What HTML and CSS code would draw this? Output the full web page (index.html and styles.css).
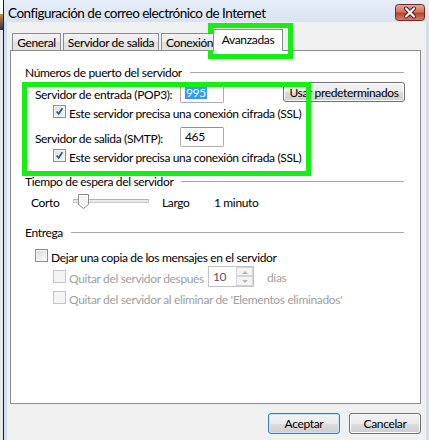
FILE: index.html
```html
<!DOCTYPE html>
<html lang="es">
<head>
  <meta charset="UTF-8" />
  <meta name="viewport" content="width=device-width, initial-scale=1.0"/>
  <title>Configuración de correo electrónico de Internet</title>
  <link rel="stylesheet" href="styles.css">
</head>
<body>

  <div class="screen">
    <div class="desk"></div>

    <div class="window">
      <div class="titlebar">
        <span class="title">Configuración de correo electrónico de Internet</span>
        <div class="close">
          <svg viewBox="0 0 30 17" width="30" height="17">
            <defs>
              <linearGradient id="red" x1="0" y1="0" x2="0" y2="1">
                <stop offset="0" stop-color="#e9a99b"/>
                <stop offset="0.45" stop-color="#d47461"/>
                <stop offset="0.55" stop-color="#c2432e"/>
                <stop offset="1" stop-color="#d8806a"/>
              </linearGradient>
            </defs>
            <rect x="0.5" y="0.5" width="29" height="16" rx="3" fill="url(#red)" stroke="#6b2b24"/>
            <path d="M11 4.5 L19 12.5 M19 4.5 L11 12.5" stroke="#4a1d18" stroke-width="4" stroke-linecap="round"/>
            <path d="M11 4.5 L19 12.5 M19 4.5 L11 12.5" stroke="#fff" stroke-width="2.2" stroke-linecap="round"/>
          </svg>
        </div>
      </div>

      <div class="client">
        <div class="tabs">
          <div class="tab tab-general">General</div>
          <div class="tab tab-salida">Servidor de salida</div>
          <div class="tab tab-conexion">Conexión</div>
          <div class="tab tab-avanzadas active">Avanzadas</div>
        </div>

        <div class="panel">
          <div class="group-head head-puertos">
            <span>Números de puerto del servidor</span>
            <div class="rule"></div>
          </div>

          <div class="row row-field row-pop">
            <span class="field-label">Servidor de entrada (POP3):</span>
            <div class="textbox"><span class="sel">995</span></div>
            <button class="btn btn-defaults">Usar predeterminados</button>
          </div>

          <div class="row row-check indent-2">
            <span class="check checked"></span>
            <span>Este servidor precisa una conexión cifrada (SSL)</span>
          </div>

          <div class="row row-field row-smtp">
            <span class="field-label">Servidor de salida (SMTP):</span>
            <div class="textbox">465</div>
          </div>

          <div class="row row-check indent-2">
            <span class="check checked"></span>
            <span>Este servidor precisa una conexión cifrada (SSL)</span>
          </div>

          <div class="group-head head-tiempo">
            <span>Tiempo de espera del servidor</span>
            <div class="rule"></div>
          </div>

          <div class="row row-slider">
            <span class="slider-min">Corto</span>
            <div class="slider">
              <div class="track"></div>
              <svg class="thumb" viewBox="0 0 11 15" width="11" height="15">
                <path d="M0.5 0.5 H10.5 V10.5 L5.5 14.5 L0.5 10.5 Z" fill="#f4f4f4" stroke="#8a8a8a"/>
                <path d="M1.5 1.5 H9.5 V10 L5.5 13.2 L1.5 10 Z" fill="none" stroke="#fff"/>
              </svg>
            </div>
            <span class="slider-max">Largo</span>
            <span>1 minuto</span>
          </div>

          <div class="group-head head-entrega">
            <span>Entrega</span>
            <div class="rule"></div>
          </div>

          <div class="row row-check indent-1 row-dejar">
            <span class="check"></span>
            <span>Dejar una copia de los mensajes en el servidor</span>
          </div>

          <div class="row row-check indent-2 disabled row-despues">
            <span class="check"></span>
            <span class="despues-label">Quitar del servidor después</span>
            <div class="spinner">
              <span class="spin-value">10</span>
              <div class="spin-buttons">
                <span class="spin-up"></span>
                <span class="spin-down"></span>
              </div>
            </div>
            <span class="dias">días</span>
          </div>

          <div class="row row-check indent-2 disabled">
            <span class="check"></span>
            <span>Quitar del servidor al eliminar de 'Elementos eliminados'</span>
          </div>
        </div>

        <div class="actions">
          <button class="btn btn-default">Aceptar</button>
          <button class="btn">Cancelar</button>
        </div>
      </div>
    </div>

    <!-- green highlight boxes drawn over the dialog -->
    <div class="mark mark-tab"></div>
    <div class="mark mark-ports"></div>
  </div>

</body>
</html>
```

FILE: styles.css
```css
body {
  margin: 0;
  padding: 0;
  font-family: Lato, 'Noto Sans', sans-serif;
  font-size: 12px;
  letter-spacing: -0.35px;
  color: #000;
  background: #fff;
  overflow: hidden;
}

.screen {
  position: relative;
  width: 429px;
  height: 440px;
  display: flex;
  overflow: hidden;
}

.desk {
  width: 3px;
  background: linear-gradient(#ffffff 0, #ffffff 14px, #c98a3a 14px, #2a2f55 30px, #e7e7e7 30px);
}

.window {
  flex: 1;
  display: flex;
  flex-direction: column;
  border-left: 1px solid #1b1b1b;
  background: linear-gradient(#e6eef8, #d8e4f2 22px, #cfdff1 22px);
}

.titlebar {
  height: 22px;
  display: flex;
  align-items: center;
  padding-left: 4px;
}

.title {
  font-size: 13.5px;
  letter-spacing: -0.5px;
  margin-top: 3px;
}

.close {
  margin-left: auto;
  margin-right: 4px;
  margin-top: 3px;
  height: 17px;
}

.close svg {
  display: block;
}

.client {
  flex: 1;
  background: #f0f0f0;
  margin: 0 3px 0 3px;
  padding-left: 3px;
  padding-right: 5px;
}

/* tabs */
.tabs {
  display: flex;
  align-items: flex-end;
  height: 21px;
  margin-top: 7px;
  padding-left: 2px;
  position: relative;
  z-index: 1;
}

.tab {
  box-sizing: border-box;
  height: 17px;
  border: 1px solid #898c95;
  border-bottom: none;
  background: linear-gradient(#f3f3f3, #ebebeb 50%, #dedede 50%, #e5e5e5);
  display: flex;
  align-items: center;
  justify-content: center;
  margin-right: 2px;
  white-space: nowrap;
}

.tab-general { width: 49px; }
.tab-salida { width: 96px; }
.tab-conexion { width: 54px; margin-right: -2px; justify-content: flex-start; padding-left: 4px; }
.tab-avanzadas { width: 70px; }

.tab.active {
  height: 22px;
  margin-bottom: -1px;
  background: #fff;
  padding-bottom: 2px;
}

/* main panel */
.panel {
  box-sizing: border-box;
  height: 354px;
  background: #fff;
  border: 1px solid #898c95;
  padding: 0 16px 0 14px;
  display: flex;
  flex-direction: column;
}

.group-head {
  height: 16px;
  display: flex;
  align-items: center;
  white-space: nowrap;
}

.group-head .rule {
  flex: 1;
  border-top: 1px solid #a6a6a6;
  margin-left: 8px;
}

.head-puertos { margin-top: 13px; }
.head-tiempo { margin-top: 8px; }
.head-entrega { margin-top: 13px; }

.row {
  display: flex;
  align-items: center;
  white-space: nowrap;
}

.row-field {
  height: 23px;
  padding-left: 10px;
}

.row-pop { margin-top: 1px; }
.row-smtp { margin-top: 4px; }

.field-label {
  width: 145px;
  padding-top: 3px;
}

.textbox {
  box-sizing: border-box;
  width: 44px;
  height: 20px;
  border: 1px solid #abadb3;
  border-top-color: #8e9399;
  border-radius: 2px;
  padding-left: 4px;
  display: flex;
  align-items: center;
}

.sel {
  background: #3399ff;
  color: #fff;
  padding: 0 1px;
  line-height: 13px;
}

.row-check {
  height: 17px;
}

.indent-1 { padding-left: 10px; }
.indent-2 { padding-left: 28px; }

.check {
  box-sizing: border-box;
  width: 13px;
  height: 13px;
  border: 1px solid #8f8f8f;
  background: linear-gradient(135deg, #dcdcdc, #fbfbfb);
  box-shadow: inset 0 0 0 1px #f4f4f4;
  margin-right: 3px;
  flex-shrink: 0;
  margin-top: -3px;
}

.check.checked {
  background:
    url("data:image/svg+xml;utf8,<svg xmlns='http://www.w3.org/2000/svg' viewBox='0 0 11 11'><path d='M2 5.5 L4.5 8.5 L9 1.5' fill='none' stroke='%232d4a98' stroke-width='2'/></svg>") center / 9px 9px no-repeat,
    linear-gradient(135deg, #dcdcdc, #fbfbfb);
}

.row-dejar { margin-top: 8px; }
.row-despues { height: 21px; margin-top: 2px; }
.row-despues + .row-check { margin-top: 2px; }

.disabled {
  color: #a0a0a0;
}

.disabled .check {
  border-color: #c5c5c5;
  background: #f4f4f4;
  box-shadow: none;
}

.row-check .check + span {
  margin-top: 1px;
}

.despues-label {
  width: 139px;
}

.spinner {
  box-sizing: border-box;
  width: 46px;
  height: 21px;
  border: 1px solid #c4c4c4;
  display: flex;
  align-items: center;
  padding-left: 4px;
  margin-top: -3px;
}

.spin-value {
  flex: 1;
  color: #555;
}

.spin-buttons {
  width: 17px;
  height: 19px;
  display: flex;
  flex-direction: column;
}

.spin-up,
.spin-down {
  flex: 1;
  box-sizing: border-box;
  border: 1px solid #d5d5d5;
  background: #f4f4f4;
  position: relative;
}

.spin-up::after,
.spin-down::after {
  content: "";
  position: absolute;
  left: 5px;
  top: 3px;
  border-left: 3px solid transparent;
  border-right: 3px solid transparent;
}

.spin-up::after { border-bottom: 3px solid #b4b4b4; }
.spin-down::after { border-top: 3px solid #b4b4b4; }

.dias {
  margin-left: 13px;
}

/* slider */
.row-slider {
  height: 18px;
  margin-top: 4px;
  padding-left: 6px;
}

.slider-min {
  width: 42px;
}

.slider {
  width: 76px;
  height: 18px;
  position: relative;
  display: flex;
  align-items: center;
}

.track {
  width: 100%;
  height: 2px;
  border: 1px solid #c8c8c8;
  border-top-color: #b3b3b3;
  background: #e7eaea;
  margin-top: -2px;
}

.thumb {
  position: absolute;
  left: 5px;
  top: 1px;
}

.slider-max {
  margin-left: 13px;
  width: 52px;
}

/* buttons */
.btn {
  box-sizing: border-box;
  font-family: inherit;
  font-size: 12px;
  letter-spacing: inherit;
  color: #000;
  height: 21px;
  border: 1px solid #707070;
  border-radius: 3px;
  background: linear-gradient(#f2f2f2, #ebebeb 50%, #dddddd 50%, #cfcfcf);
  box-shadow: inset 0 0 0 1px #fcfcfc;
  padding: 0;
  white-space: nowrap;
}

.btn-defaults {
  width: 122px;
  height: 20px;
  margin-left: auto;
  margin-right: -1px;
  align-self: flex-start;
  margin-top: 1px;
}

.actions {
  display: flex;
  justify-content: flex-end;
  gap: 9px;
  margin-top: 9px;
}

.actions .btn {
  width: 72px;
}

.btn-default {
  border-color: #3c7fb1;
  box-shadow: inset 0 0 0 1px #bfe6f8;
}

/* annotation highlights */
.mark {
  position: absolute;
  border: 5px solid #16ee16;
  box-sizing: border-box;
  pointer-events: none;
}

.mark-tab {
  left: 208px;
  top: 23px;
  width: 85px;
  height: 36px;
}

.mark-ports {
  left: 22px;
  top: 82px;
  width: 289px;
  height: 94px;
}
```
